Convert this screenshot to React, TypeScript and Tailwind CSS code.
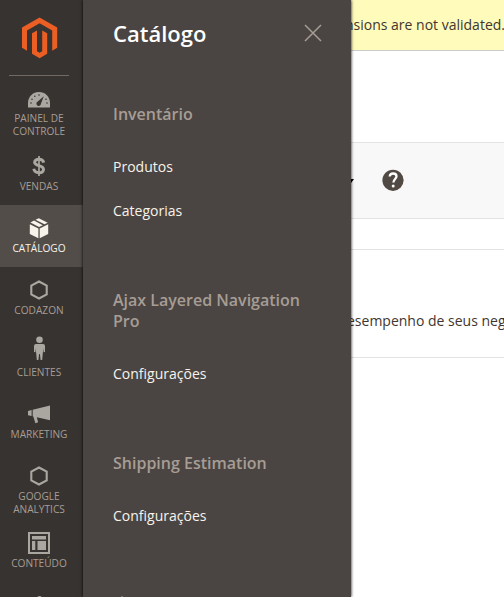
import type { ReactNode } from "react";

const Hexagon = () => (
  <svg width="18" height="20" viewBox="0 0 18 20" fill="none" stroke="currentColor" strokeWidth="2.1">
    <path d="M9 1.5 16.7 5.7V14.3L9 18.5 1.3 14.3V5.7Z" />
  </svg>
);

const Gauge = () => (
  <svg width="22" height="16" viewBox="0 0 22 16" fill="currentColor" className="mt-[2px]">
    <path d="M11 0C4.8 0 0 4.8 0 11v4.5h22V11C22 4.8 17.200 0 11 0Z" />
    <g fill="#373330">
      <path d="M15.800 4.200 13 11.500a2.300 2.300 0 1 1-3.200-2Z" />
      <circle cx="3" cy="11" r=".8" />
      <circle cx="4" cy="7.200" r=".8" />
      <circle cx="6.800" cy="4.200" r=".8" />
      <circle cx="11" cy="3" r=".8" />
      <circle cx="18" cy="7.200" r=".8" />
      <circle cx="19" cy="11" r=".8" />
    </g>
  </svg>
);

const Dollar = () => (
  <svg width="14" height="20" viewBox="0 0 14 20" fill="none" stroke="currentColor">
    <path d="M7 0v20" strokeWidth="1.700" />
    <path d="M11.700 6.600C11.200 4.200 9.300 3.200 7 3.200 4.500 3.200 2.600 4.300 2.600 6.200c0 4.300 8.900 2.600 8.900 7 0 2.300-1.900 3.500-4.500 3.500S2.200 15.400 1.800 12.800" strokeWidth="2.900" />
  </svg>
);

const Box = () => (
  <svg width="20" height="21" viewBox="0 0 20 21" fill="currentColor">
    <path d="M.8 6.300 9.400 10.400V20.300L.8 16Z" />
    <path d="M10.700 10.400 19.200 6.300V16L10.700 20.300Z" />
    <path d="M6.500 1.800 9.800.2 18.700 4.700 15.500 6.300Z" />
    <path d="M1.400 4.400 5 2.600 13.800 7.200 10.100 9.100Z" />
  </svg>
);

const Person = () => (
  <svg width="11" height="25" viewBox="0 0 11 25" fill="currentColor" className="mt-[-7px]">
    <circle cx="5.500" cy="3.700" r="3.300" />
    <path d="M2 8h7q2 0 2 2v6l-1.500.3v-4l-.5 3-.8 8.700H6.600L5.900 18h-.8l-.7 6H2.800L2 15.300l-.5-3v4L0 16v-6q0-2 2-2Z" />
  </svg>
);

const Megaphone = () => (
  <svg width="22" height="19" viewBox="0 0 22 19" fill="currentColor">
    <path d="M0 6 3.600 5v6L0 10.200ZM4.700 4.700 22 .5v14.700l-13.200-2.900 1.300 4.900-2.700 1L5.300 11.500l-.6-.2Z" />
  </svg>
);

const Layout = () => (
  <svg width="22" height="22" viewBox="0 0 22 22" fill="currentColor" className="mt-[-2px]">
    <path fillRule="evenodd" d="M0 0h22v22H0ZM2 2v18h18V2Z" />
    <path d="M4 4h14v3.500H4ZM4 9h3.300v9H4ZM9.500 9H18v9H9.500Z" />
  </svg>
);

type Item = { label: string; icon: ReactNode; active?: boolean };

const menu: Item[] = [
  { label: "Painel de Controle", icon: <Gauge /> },
  { label: "Vendas", icon: <Dollar /> },
  { label: "Catálogo", icon: <Box />, active: true },
  { label: "Codazon", icon: <Hexagon /> },
  { label: "Clientes", icon: <Person /> },
  { label: "Marketing", icon: <Megaphone /> },
  { label: "Google Analytics", icon: <Hexagon /> },
  { label: "Conteúdo", icon: <Layout /> },
];

const groups = [
  { title: "Inventário", links: ["Produtos", "Categorias"] },
  { title: "Ajax Layered Navigation Pro", links: ["Configurações"] },
  { title: "Shipping Estimation", links: ["Configurações"] },
];

function Sidebar() {
  return (
    <nav className="flex h-full w-[83px] shrink-0 flex-col overflow-hidden bg-[#373330]">
      <div className="mx-[9px] mb-[-0.5px] flex h-[76px] w-[60px] shrink-0 justify-center border-b border-[#736963] pt-[17px] pl-[1px]">
        <svg width="36" height="42" viewBox="0 0 36 42" fill="#eb5f25">
          <path d="M17.600 .4 35.200 10.500V30.800L30.200 33.800V13.500L17.600 6.300 5 13.500V33.800L0 30.800V10.500Z" />
          <path d="M10 16.300 15 13.400V34.200L17.600 35.700 20.200 34.200V13.400L25.200 16.300V36.700L17.600 41.200 10 36.700Z" />
        </svg>
      </div>
      {menu.map((item) => (
        <a
          key={item.label}
          className={`flex min-h-[62px] shrink-0 flex-col items-center pt-[10.500px] pr-[5px] ${item.active ? "bg-[#524d49] text-[#f7f3eb]" : "text-[#a79d95]"}`}
        >
          <span className={`flex h-[25px] items-center ${item.active ? "" : "text-[#aaa6a0]"}`}>{item.icon}</span>
          <span className="w-[70px] scale-x-[0.92] pb-[6px] text-center text-[11px] leading-[13px] uppercase">
            {item.label}
          </span>
        </a>
      ))}
      <div className="mt-[13px] mr-[5px] h-2 w-[5px] shrink-0 self-center rounded-t-sm bg-[#aaa6a0]" />
    </nav>
  );
}

function Submenu() {
  return (
    <aside className="relative z-10 h-full w-[268px] shrink-0 overflow-hidden bg-[#4a4542] px-[30px] shadow-[0_0_3px_#000]">
      <header className="flex h-[66px] items-center justify-between">
        <h1 className="text-[22px] leading-[30px] font-semibold text-white">Catálogo</h1>
        <svg width="18" height="18" viewBox="0 0 18 18" fill="none" stroke="#a79d95" strokeWidth="1.500" className="mr-[-1px] mb-[1px]">
          <path d="m1 1 16 16M17 1 1 17" />
        </svg>
      </header>
      <div className="flex flex-col gap-[67px] pt-[38px]">
        {groups.map((group) => (
          <section key={group.title}>
            <h2 className="mb-[30px] text-[16px] leading-[21px] font-semibold text-[#a79d95]">{group.title}</h2>
            <ul className="flex flex-col gap-[20px] text-[14px] leading-[24px] text-[#f7f3eb]">
              {group.links.map((link) => (
                <li key={link}>{link}</li>
              ))}
            </ul>
          </section>
        ))}
        <div className="mt-[1px] ml-[8px] h-[2px] w-[2px] bg-[#7d746e]" />
      </div>
    </aside>
  );
}

export default function App() {
  return (
    <div className="flex h-[597px] w-[504px] overflow-hidden bg-white font-['Open_Sans','Noto_Sans',sans-serif]">
      <Sidebar />
      <Submenu />
      <main className="flex min-w-0 flex-1 flex-col overflow-hidden text-[14px] whitespace-nowrap text-[#41362f]">
        <div className="flex h-[51px] shrink-0 items-center justify-end border-b border-[#cccccc] bg-[#fffbbb] pb-[1px]">
          <span className="mr-[-1px]">nsions are not validated.</span>
        </div>
        <div className="mt-[91px] flex h-[77px] shrink-0 items-center border-y border-[#e3e3e3] bg-[#f8f8f8]">
          <svg width="3" height="5" viewBox="0 0 3 5" fill="#000">
            <path d="M0 1h3L0 5Z" />
          </svg>
          <svg width="22" height="22" viewBox="0 0 22 22" className="mb-[1px] ml-[28px]">
            <circle cx="11" cy="11.300" r="10.600" fill="#514943" />
            <path d="M7.700 7.500C7.900 5.600 9.200 4.500 11.100 4.500c2.100 0 3.400 1.100 3.400 2.800 0 2.500-3.100 2.900-3.100 6.100" fill="none" stroke="#fff" strokeWidth="2.300" />
            <circle cx="11.200" cy="17" r="1.500" fill="#fff" />
          </svg>
        </div>
        <div className="h-[31px] shrink-0 border-b border-[#e3e3e3]" />
        <div className="flex h-[108px] shrink-0 items-center border-b border-[#e3e3e3] pt-[34px]">
          <span className="ml-[-4px]">esempenho de seus neg</span>
        </div>
      </main>
    </div>
  );
}
